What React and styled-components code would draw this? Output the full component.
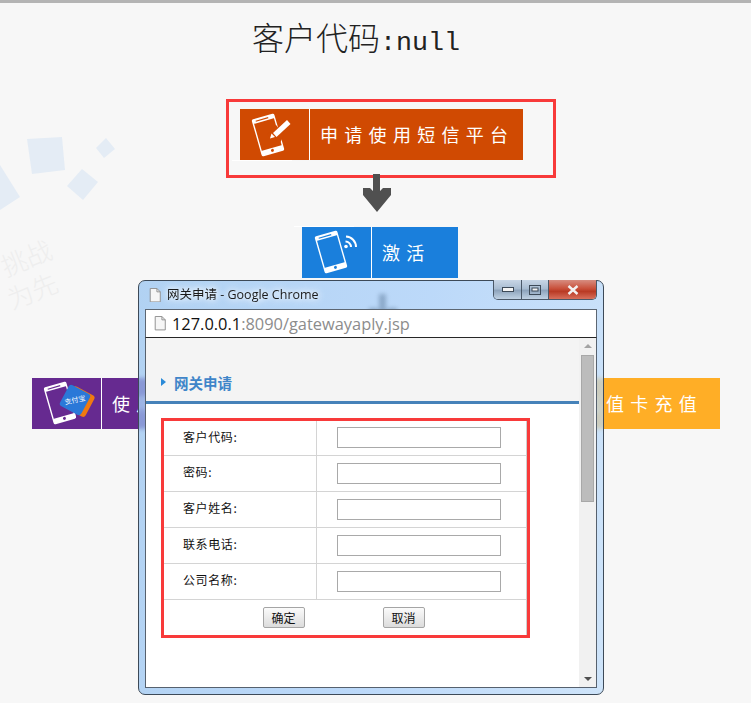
import React from "react";
import styled, { createGlobalStyle } from "styled-components";

const CJK = '"Noto Sans CJK SC", "Liberation Sans", sans-serif';

const Global = createGlobalStyle`
  html, body {
    margin: 0;
    height: 703px;
    overflow: hidden;
    background: #f7f7f7;
  }
  #root { height: 703px; }
`;

const Page = styled.div`
  position: relative;
  height: 700px;
  border-top: 3px solid #b4b4b4;
  display: flex;
  flex-direction: column;
  align-items: center;
  font-family: ${CJK};
  overflow: hidden;
`;

const Watermark = styled.svg`
  position: absolute;
  left: 0;
  top: 0;
`;

const Heading = styled.h1`
  margin: 11px 39px 0 0;
  font-size: 32px;
  line-height: 44px;
  font-weight: 300;
  color: #222;
  white-space: nowrap;
  span {
    font-family: "Liberation Mono", monospace;
    font-size: 26.67px;
  }
`;

const Highlight = styled.div`
  margin: 34px 0 0 31px;
  padding: 7px 30px 15px 11px;
  border: 3px solid #f83a3a;
`;

const Step = styled.div`
  position: relative;
  display: flex;
  height: 51px;
  width: ${(p) => p.$width}px;
  background: ${(p) => p.$bg};
  margin: ${(p) => p.$margin || 0};
  color: #fff;
  &::after {
    content: "";
    display: ${(p) => (p.$edge ? "block" : "none")};
    position: absolute;
    left: -8px;
    ${(p) => (p.$edge === "top" ? "top: -1px;" : "bottom: -1px;")}
    width: 60px;
    height: 1px;
    background: #fff;
  }
`;

const StepIcon = styled.div`
  flex: none;
  width: 69px;
  height: 51px;
  border-right: 1px solid #fff;
  svg { display: block; }
`;

const StepLabel = styled.div`
  padding-left: 10px;
  font-size: 18px;
  line-height: 50px;
  letter-spacing: 6.3px;
  white-space: nowrap;
  overflow: hidden;
`;

const ArrowDown = styled.svg`
  display: block;
  flex: none;
  margin: ${(p) => p.$margin};
`;

const PaymentRow = styled.div`
  align-self: stretch;
  display: flex;
  justify-content: space-between;
  margin: 45px 31px 0 32px;
`;

const Popup = styled.div`
  position: absolute;
  left: 138px;
  top: 277px;
  width: 466px;
  height: 415px;
  box-sizing: border-box;
  padding: 0 6px 6px 6px;
  display: flex;
  flex-direction: column;
  border: 1px solid #3d4a58;
  border-radius: 7px;
  background: linear-gradient(100deg, rgba(150, 195, 240, 0.72) 0%, rgba(165, 205, 250, 0.72) 55%, rgba(190, 220, 250, 0.72) 100%);
  backdrop-filter: blur(2px);
`;

const TitleBar = styled.div`
  flex: none;
  height: 28px;
  display: flex;
  align-items: flex-start;
  position: relative;
  font-size: 12.5px;
  color: #1a1a1a;
`;

const TitleText = styled.span`
  margin: 6px 0 0 6px;
  line-height: 16px;
  font-family: "Open Sans", ${CJK};
  text-shadow: 0 0 7px #fff, 0 0 7px #fff;
  white-space: nowrap;
`;

const PageGlyph = styled.svg`
  flex: none;
  display: block;
  margin: ${(p) => p.$margin};
`;

const WindowControls = styled.div`
  position: absolute;
  right: 0;
  top: -1px;
  display: flex;
  height: 19px;
  border: 1px solid #4a5868;
  border-top: 0;
  border-radius: 0 0 5px 5px;
  overflow: hidden;
`;

const ControlButton = styled.div`
  width: ${(p) => p.$width}px;
  display: flex;
  align-items: center;
  justify-content: center;
  background: ${(p) =>
    p.$close
      ? "linear-gradient(#d78d80 0%, #c9503a 45%, #b93a24 60%, #d8705c 100%)"
      : "linear-gradient(#c8d6e6 0%, #a9bdd2 45%, #8ea4bc 55%, #c0d2e4 100%)"};
  & + & { border-left: 1px solid #4a5868; }
`;

const AddressBar = styled.div`
  flex: none;
  height: 29px;
  box-sizing: border-box;
  display: flex;
  align-items: center;
  background: #fff;
  border: 1px solid #5c6672;
  border-bottom: 1px solid #262626;
  font-family: "Open Sans", "Liberation Sans", sans-serif;
  font-size: 16.4px;
  color: #8c8c8c;
  b { font-weight: 400; color: #111; }
`;

const Viewport = styled.div`
  flex: 1;
  min-height: 0;
  display: flex;
  background: #fff;
  border-bottom: 1px solid #56616e;
  border-right: 1px solid #56616e;
  border-left: 1px solid #56616e;
`;

const PageBody = styled.div`
  flex: 1;
  min-width: 0;
`;

const SectionHeader = styled.div`
  height: 66px;
  box-sizing: border-box;
  background: #f4f4f4;
  border-bottom: 3px solid #4682b9;
  display: flex;
  align-items: center;
  padding: 25px 0 0 15px;
  gap: 8px;
  color: #3f85c9;
  font-size: 14.5px;
  font-weight: 700;
`;

const Caret = styled.i`
  width: 0;
  height: 0;
  border-left: 5px solid #2a8ad8;
  border-top: 4px solid transparent;
  border-bottom: 4px solid transparent;
`;

const FormFrame = styled.div`
  margin: 14px 0 0 15px;
  width: 369px;
  box-sizing: border-box;
  border: 3px solid #f83a3a;
  background: #fff;
`;

const FormTable = styled.div`
  width: 363px;
  height: 214px;
  box-sizing: border-box;
  border-right: 1px solid #cfcfcf;
`;

const FormRow = styled.div`
  display: grid;
  grid-template-columns: 153px 1fr;
  height: ${(p) => (p.$first ? 35 : 36)}px;
  box-sizing: border-box;
  border-bottom: 1px solid #d4d4d4;
`;

const FieldLabel = styled.div`
  border-right: 1px solid #d4d4d4;
  padding-left: 19px;
  font-size: 12px;
  letter-spacing: 0.6px;
  line-height: 32px;
  color: #111;
`;

const FieldCell = styled.div`
  padding: ${(p) => (p.$first ? 6 : 7)}px 0 0 20px;
`;

const Input = styled.input`
  display: block;
  width: 164px;
  height: 21px;
  box-sizing: border-box;
  border: 1px solid #a9a9a9;
  background: #fff;
  padding: 0;
`;

const ActionRow = styled.div`
  display: flex;
  justify-content: center;
  gap: 78px;
  padding: 7px 3px 0 0;
`;

const ActionButton = styled.button`
  width: 42px;
  height: 21px;
  padding: 0;
  box-sizing: border-box;
  border: 1px solid #a5a5a5;
  border-radius: 2px;
  background: linear-gradient(#fbfbfb, #dcdcdc);
  font-family: ${CJK};
  font-size: 12px;
  line-height: 18px;
  color: #111;
`;

const Scrollbar = styled.div`
  flex: none;
  width: 17px;
  background: #f1f1f1;
  position: relative;
  display: flex;
  flex-direction: column;
  align-items: center;
`;

const ScrollThumb = styled.div`
  margin-top: 7px;
  width: 13px;
  height: 147px;
  box-sizing: border-box;
  background: #bcbcbc;
  border: 1px solid #a8a8a8;
`;

const ScrollArrow = styled.i`
  width: 0;
  height: 0;
  border-left: 4px solid transparent;
  border-right: 4px solid transparent;
  ${(p) => (p.$down ? "border-top: 4px solid #505050;" : "border-bottom: 4px solid #a3a3a3;")}
  margin-top: ${(p) => (p.$down ? 175 : 6)}px;
`;

// phone outline, tilted like the artwork in the step buttons
const Phone = ({ x, y, bg }) => (
  <g transform={`translate(${x} ${y}) rotate(-16)`}>
    <rect x="-11" y="-18.5" width="22" height="37" rx="1" fill="none" stroke="#fff" strokeWidth="1.4" />
    <rect x="-11" y="-18.5" width="22" height="4" fill="#fff" />
    <rect x="-8" y="-17.2" width="13" height="1.2" fill={bg} />
    <rect x="-11" y="13.5" width="22" height="5" fill="#fff" />
    <circle cx="0" cy="16" r="1.5" fill={bg} />
  </g>
);

const OrangeIcon = () => (
  <svg width="68" height="51" viewBox="0 0 68 51">
    <Phone x={28} y={26} bg="#d04a02" />
    <path d="M27 26 L40 34 L44 26 L36 16Z" fill="#d04a02" />
    <path d="M33 24 L47 11 L50.5 15 L36.5 28 Z" fill="#fff" />
    <path d="M30 29.5 L31.5 24.5 L35 28 Z" fill="#fff" />
  </svg>
);

const BlueIcon = () => (
  <svg width="68" height="51" viewBox="0 0 68 51">
    <Phone x={29} y={25} bg="#1a7fdc" />
    <circle cx="44" cy="19.5" r="1.8" fill="#fff" />
    <path d="M43.5 14.5 A5.5 5.5 0 0 1 49 20" fill="none" stroke="#fff" strokeWidth="2" />
    <path d="M44 9.5 A10.5 10.5 0 0 1 54 20" fill="none" stroke="#fff" strokeWidth="2" />
  </svg>
);

const AlipayIcon = () => (
  <svg width="68" height="51" viewBox="0 0 68 51">
    <Phone x={28} y={25} bg="#662a90" />
    <g transform="translate(46 24) rotate(28)">
      <rect x="-11" y="-13" width="24" height="24" rx="3" fill="#f07a10" />
    </g>
    <g transform="translate(43 22) rotate(28)">
      <rect x="-12" y="-12" width="24" height="24" rx="3" fill="#2a78d8" />
      <text x="0" y="2.5" textAnchor="middle" fontSize="7" fill="#fff" fontFamily={CJK} transform="rotate(-40)">
        支付宝
      </text>
    </g>
  </svg>
);

const StepArrow = ({ margin }) => (
  <ArrowDown $margin={margin} width="30" height="40" viewBox="0 0 30 40">
    <path d="M11 1 H18 V18 L21 15 L29 15 V22 L15 39 L1 22 V15 H8 L11 18 Z" fill="#505050" />
  </ArrowDown>
);

const FilePage = ({ size, margin }) => (
  <PageGlyph $margin={margin} width={size} height={size * 1.2} viewBox="0 0 12 15">
    <path d="M1 .5 H8 L11.5 4 V14.5 H1 Z" fill="#f6f6f6" stroke="#8f8f8f" />
    <path d="M8 .5 V4 H11.5" fill="none" stroke="#8f8f8f" />
  </PageGlyph>
);

const fields = ["客户代码:", "密码:", "客户姓名:", "联系电话:", "公司名称:"];

export default function App() {
  return (
    <>
      <Global />
      <Page>
        <Watermark width="130" height="320" viewBox="0 3 130 320">
          <g fill="#e4ecf5">
            <path d="M27 139 L62 137 L65 170 L32 174 Z" />
            <path d="M106 138 L115 149 L104 158 L96 148 Z" />
            <path d="M82 169 L98 182 L83 200 L67 186 Z" />
            <path d="M0 165 L20 197 L0 210 Z" />
          </g>
          <g fill="#eeeeee" fontFamily={CJK} fontSize="26" fontWeight="300">
            <text x="6" y="277" transform="rotate(-22 6 277)">挑战</text>
            <text x="12" y="310" transform="rotate(-22 12 310)">为先</text>
          </g>
        </Watermark>

        <Heading>
          客户代码<span>:null</span>
        </Heading>

        <Highlight>
          <Step $width={283} $bg="#d04a02" $edge="bottom">
            <StepIcon><OrangeIcon /></StepIcon>
            <StepLabel>申请使用短信平台</StepLabel>
          </Step>
        </Highlight>

        <StepArrow margin="-5px 0 0 3px" />

        <Step $width={156} $bg="#1a7fdc" $edge="top" $margin="14px 0 0 9px">
          <StepIcon><BlueIcon /></StepIcon>
          <StepLabel>激活</StepLabel>
        </Step>

        <StepArrow margin="15px 0 0 14px" />

        <PaymentRow>
          <Step $width={273} $bg="#662a90">
            <StepIcon><AlipayIcon /></StepIcon>
            <StepLabel>使用支付宝充值</StepLabel>
          </Step>
          <Step $width={267} $bg="#ffae26">
            <StepIcon />
            <StepLabel>使用充值卡充值</StepLabel>
          </Step>
        </PaymentRow>

        <Popup>
          <TitleBar>
            <FilePage size={12} margin="7px 0 0 4px" />
            <TitleText>网关申请 - Google Chrome</TitleText>
            <WindowControls>
              <ControlButton $width={27}>
                <svg width="12" height="6" viewBox="0 0 12 6"><rect x=".5" y=".5" width="11" height="4" fill="#f4f4f4" stroke="#3d4a58" /></svg>
              </ControlButton>
              <ControlButton $width={26}>
                <svg width="12" height="10" viewBox="0 0 12 10"><rect x=".5" y=".5" width="11" height="9" fill="none" stroke="#3d4a58" /><rect x="3" y="3" width="6" height="3" fill="#f4f4f4" stroke="#3d4a58" /></svg>
              </ControlButton>
              <ControlButton $width={47} $close>
                <svg width="12" height="10" viewBox="0 0 12 10"><path d="M1.5 1 L10.5 9 M10.5 1 L1.5 9" stroke="#f2f2f2" strokeWidth="2.4" /></svg>
              </ControlButton>
            </WindowControls>
          </TitleBar>
          <AddressBar>
            <FilePage size={12} margin="0 6px 0 8px" />
            <span><b>127.0.0.1</b>:8090/gatewayaply.jsp</span>
          </AddressBar>
          <Viewport>
            <PageBody>
              <SectionHeader>
                <Caret />
                网关申请
              </SectionHeader>
              <FormFrame>
                <FormTable>
                  {fields.map((label, i) => (
                    <FormRow key={label} $first={i === 0}>
                      <FieldLabel>{label}</FieldLabel>
                      <FieldCell $first={i === 0}><Input /></FieldCell>
                    </FormRow>
                  ))}
                  <ActionRow>
                    <ActionButton>确定</ActionButton>
                    <ActionButton>取消</ActionButton>
                  </ActionRow>
                </FormTable>
              </FormFrame>
            </PageBody>
            <Scrollbar>
              <ScrollArrow />
              <ScrollThumb />
              <ScrollArrow $down />
            </Scrollbar>
          </Viewport>
        </Popup>
      </Page>
    </>
  );
}
